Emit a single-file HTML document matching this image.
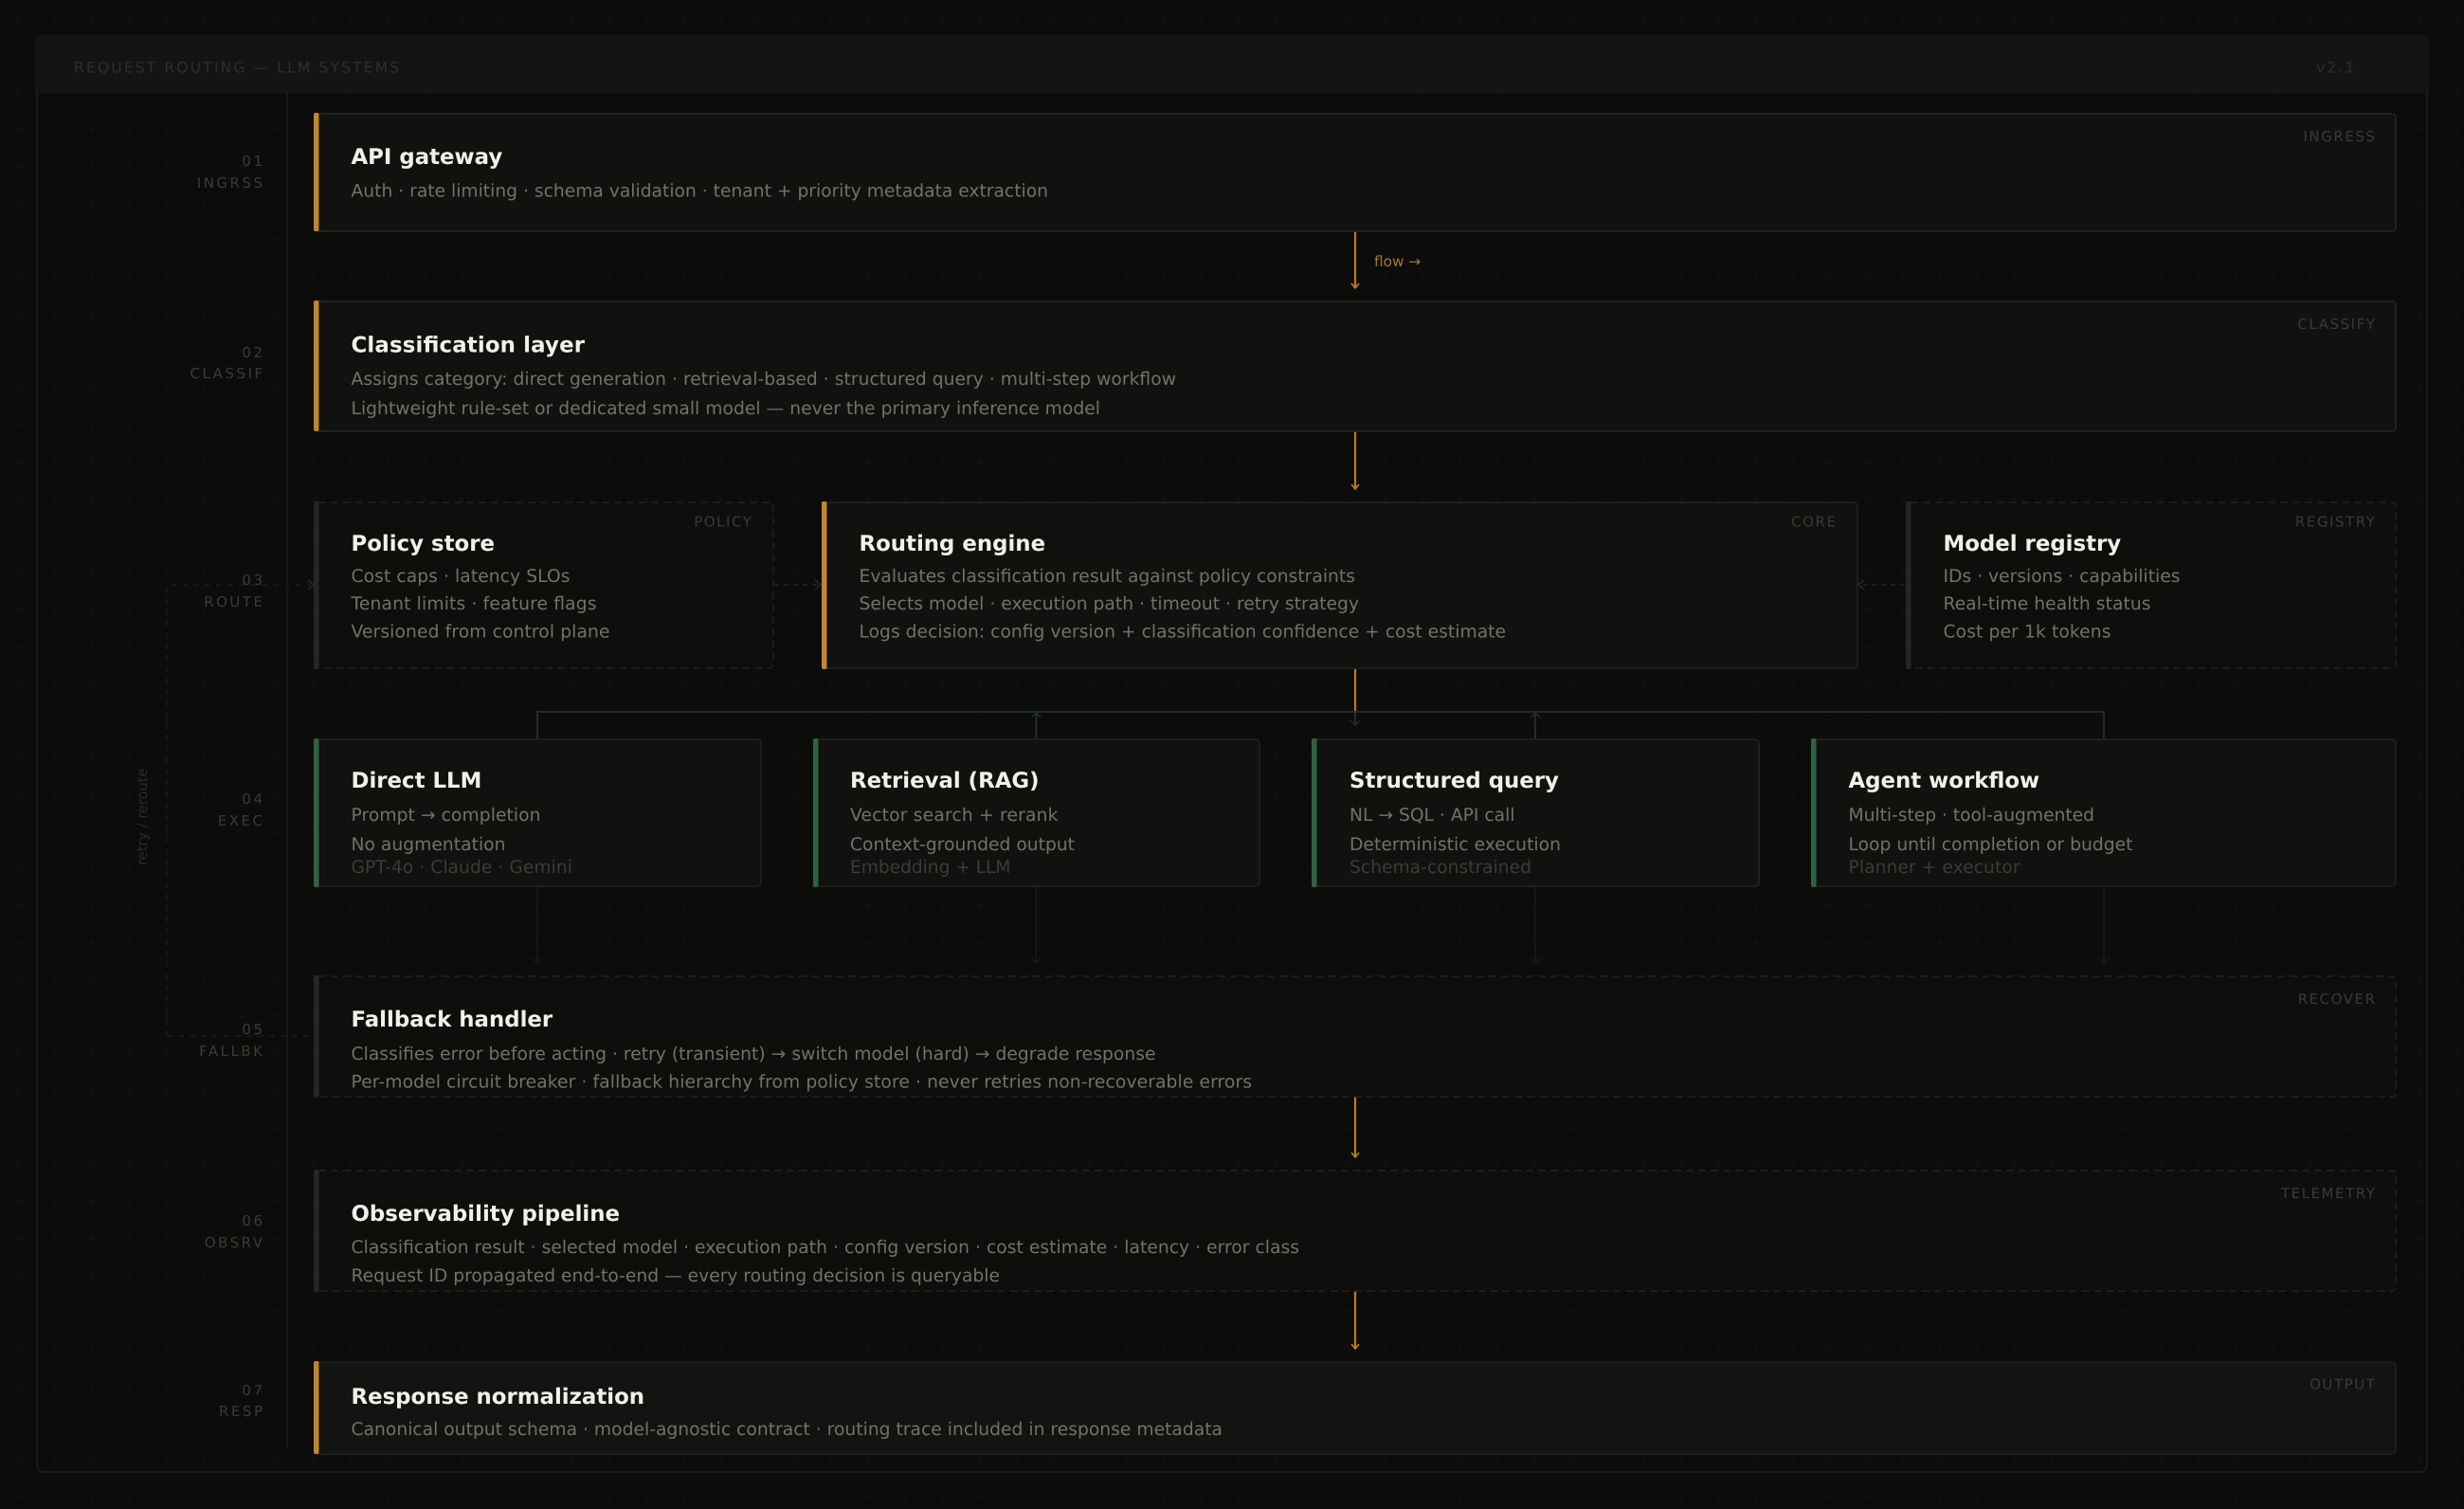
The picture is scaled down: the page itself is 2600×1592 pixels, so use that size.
<!DOCTYPE html>
<html><head><meta charset="utf-8"><title>Request Routing</title>
<style>
html,body{margin:0;padding:0;width:2600px;height:1592px;background:#0d0d0c;overflow:hidden}
svg{display:block;position:absolute;left:0;top:0}
text{font-family:"DejaVu Sans",sans-serif;text-rendering:geometricPrecision}
.t{font-size:22.85px;font-weight:700;fill:#f2f0ea}
.b{font-size:18.7px;fill:#72716a}
.d{font-size:18.7px;fill:#3c3b37}
.g{font-size:15px;letter-spacing:1.55px;fill:#3a3a36;text-anchor:end}
.s{font-size:15px;letter-spacing:2.5px;fill:#3b3b37;text-anchor:end}
.h{font-size:15.6px;letter-spacing:2.1px;fill:#2e2e2c}
.c{fill:#111110;stroke:#1e1e1d;stroke-width:2}
.c2{fill:#131312;stroke:#1c1c1b;stroke-width:2}
.dc{fill:#0e0e0d;stroke:#1d1d1c;stroke-width:2;stroke-dasharray:8 5}
.or{stroke:#b67c2c;stroke-width:2.2;fill:none}
.oh{stroke:#b67c2c;stroke-width:1.6;fill:none}
.gr{stroke:#222e26;stroke-width:2;fill:none}
.gh{stroke:#222e26;stroke-width:1.5;fill:none}
.dm{stroke:#181a18;stroke-width:1.6;fill:none}
.da{stroke:#1f1f1e;stroke-width:2;fill:none;stroke-dasharray:5 5}
.dr{stroke:#191918;stroke-width:1.6;fill:none;stroke-dasharray:6 6}
.ah{stroke:#282827;stroke-width:1.6;fill:none}
</style></head><body>
<svg width="2600" height="1592" viewBox="0 0 2600 1592" xmlns="http://www.w3.org/2000/svg">
<defs><pattern id="dots" width="39" height="39" patternUnits="userSpaceOnUse"><circle cx="19.5" cy="19.5" r="2" fill="#111110"/></pattern></defs>
<rect width="2600" height="1592" fill="#0c0c0b"/>
<rect width="2600" height="1592" fill="url(#dots)"/>

<!-- outer frame -->
<rect x="39" y="39" width="2522" height="1514" rx="8" fill="none" stroke="#1c1c1b" stroke-width="2"/>
<path d="M38 97V46a8 8 0 0 1 8-8H2554a8 8 0 0 1 8 8V97Z" fill="#141413" stroke="#1a1a19" stroke-width="1"/>
<line x1="303" y1="97" x2="303" y2="1527" stroke="#181817" stroke-width="2"/>
<text class="h" x="78" y="76.500">REQUEST ROUTING — LLM SYSTEMS</text>
<text class="h" x="2444" y="76.500">v2.1</text>

<!-- sidebar -->
<text class="s" x="279.500" y="175">01</text><text class="s" x="279.500" y="198">INGRSS</text>
<text class="s" x="279.500" y="377">02</text><text class="s" x="279.500" y="399">CLASSIF</text>
<text class="s" x="279.500" y="617">03</text><text class="s" x="279.500" y="640">ROUTE</text>
<text class="s" x="279.500" y="848">04</text><text class="s" x="279.500" y="871">EXEC</text>
<text class="s" x="279.500" y="1091">05</text><text class="s" x="279.500" y="1114">FALLBK</text>
<text class="s" x="279.500" y="1293">06</text><text class="s" x="279.500" y="1316">OBSRV</text>
<text class="s" x="279.500" y="1472">07</text><text class="s" x="279.500" y="1494">RESP</text>

<!-- dashed retry path -->
<path class="dr" d="M176 1093V617H328"/>
<path class="dr" d="M176 1093H331"/>
<path class="ah" d="M325 612l6 5-6 5"/>
<path class="da" d="M817 617H862"/><path class="ah" d="M860 612l6 5-6 5"/>
<path class="da" d="M2010 617H1966"/><path class="ah" d="M1967 612l-6 5 6 5"/>
<text x="0" y="0" font-size="14.6" fill="#2b2b29" transform="translate(155 913) rotate(-90)">retry / reroute</text>

<!-- connectors -->
<path class="or" d="M1430 244V304"/><path class="oh" d="M1426 299l4 5 4-5"/>
<text x="1450" y="281" font-size="15.3" fill="#a8742c">flow →</text>
<path class="or" d="M1430 455V516"/><path class="oh" d="M1426 511l4 5 4-5"/>
<path class="or" d="M1430 705V750"/>
<path class="gr" d="M567 779V751H2220V779"/>
<path class="gr" d="M1430 751V765"/><path class="gh" d="M1425 760l5 5 5-5"/>
<path class="gr" d="M1093.500 779V752"/><path class="gh" d="M1088.500 757l5-5 5 5"/>
<path class="gr" d="M1620 779V752"/><path class="gh" d="M1615 757l5-5 5 5"/>
<path class="dm" d="M567 936V1016M562 1011l5 5 5-5"/>
<path class="dm" d="M1093.500 936V1016M1088.500 1011l5 5 5-5"/>
<path class="dm" d="M1620 936V1016M1615 1011l5 5 5-5"/>
<path class="dm" d="M2220 936V1016M2215 1011l5 5 5-5"/>
<path class="or" d="M1430 1157V1221"/><path class="oh" d="M1426 1216l4 5 4-5"/>
<path class="or" d="M1430 1362V1423"/><path class="oh" d="M1426 1418l4 5 4-5"/>

<!-- row 1 -->
<rect class="c" x="332" y="120" width="2196" height="124" rx="4" style="stroke:#212120"/>
<rect x="331" y="119" width="5.500" height="125" rx="2" fill="#c0852e"/>
<text class="t" x="370.500" y="173">API gateway</text>
<text class="b" x="370.500" y="207.500" textLength="735.500">Auth · rate limiting · schema validation · tenant + priority metadata extraction</text>
<text class="g" x="2507.500" y="149">INGRESS</text>

<!-- row 2 -->
<rect class="c" x="332" y="318" width="2196" height="137" rx="4" style="stroke:#212120"/>
<rect x="331" y="317" width="5.500" height="138" rx="2" fill="#c0852e"/>
<text class="t" x="370.500" y="371.500" textLength="246.500">Classification layer</text>
<text class="b" x="370.500" y="406" textLength="870.500">Assigns category: direct generation · retrieval-based · structured query · multi-step workflow</text>
<text class="b" x="370.500" y="437" textLength="790.500">Lightweight rule-set or dedicated small model — never the primary inference model</text>
<text class="g" x="2507.500" y="347">CLASSIFY</text>

<!-- row 3 -->
<rect class="dc" x="332" y="530" width="484" height="175" rx="4"/>
<rect x="331" y="529" width="5.500" height="177" rx="2" fill="#262624"/>
<text class="t" x="370.500" y="581">Policy store</text>
<text class="b" x="370.500" y="614" textLength="231">Cost caps · latency SLOs</text>
<text class="b" x="370.500" y="643" textLength="259">Tenant limits · feature flags</text>
<text class="b" x="370.500" y="672.500" textLength="273">Versioned from control plane</text>
<text class="g" x="794.500" y="555.500">POLICY</text>

<rect class="c" x="868" y="530" width="1092" height="175" rx="4"/>
<rect x="867" y="529" width="5.500" height="177" rx="2" fill="#c0852e"/>
<text class="t" x="906.500" y="581">Routing engine</text>
<text class="b" x="906.500" y="614" textLength="523.500">Evaluates classification result against policy constraints</text>
<text class="b" x="906.500" y="643" textLength="527.500">Selects model · execution path · timeout · retry strategy</text>
<text class="b" x="906.500" y="672.500" textLength="682.500">Logs decision: config version + classification confidence + cost estimate</text>
<text class="g" x="1938.500" y="555.500">CORE</text>

<rect class="dc" x="2012" y="530" width="516" height="175" rx="4"/>
<rect x="2011" y="529" width="5.500" height="177" rx="2" fill="#262624"/>
<text class="t" x="2050.500" y="581">Model registry</text>
<text class="b" x="2050.500" y="614" textLength="250">IDs · versions · capabilities</text>
<text class="b" x="2050.500" y="643" textLength="219">Real-time health status</text>
<text class="b" x="2050.500" y="672.500" textLength="177">Cost per 1k tokens</text>
<text class="g" x="2507.500" y="555.500">REGISTRY</text>

<!-- row 4 -->
<rect class="c" x="332" y="780" width="471" height="155" rx="4"/>
<rect x="331" y="779" width="5.500" height="157" rx="2" fill="#2c6340"/>
<text class="t" x="370.500" y="831">Direct LLM</text>
<text class="b" x="370.500" y="866" textLength="200">Prompt → completion</text>
<text class="b" x="370.500" y="897" textLength="163">No augmentation</text>
<text class="d" x="370.500" y="921" textLength="233.500">GPT-4o · Claude · Gemini</text>

<rect class="c" x="859" y="780" width="470" height="155" rx="4"/>
<rect x="858" y="779" width="5.500" height="157" rx="2" fill="#2c6340"/>
<text class="t" x="897" y="831">Retrieval (RAG)</text>
<text class="b" x="897" y="866" textLength="219.500">Vector search + rerank</text>
<text class="b" x="897" y="897" textLength="237">Context-grounded output</text>
<text class="d" x="897" y="921" textLength="169.500">Embedding + LLM</text>

<rect class="c" x="1385" y="780" width="471" height="155" rx="4"/>
<rect x="1384" y="779" width="5.500" height="157" rx="2" fill="#2c6340"/>
<text class="t" x="1424" y="831">Structured query</text>
<text class="b" x="1424" y="866" textLength="174.500">NL → SQL · API call</text>
<text class="b" x="1424" y="897" textLength="223">Deterministic execution</text>
<text class="d" x="1424" y="921" textLength="192">Schema-constrained</text>

<rect class="c" x="1912" y="780" width="616" height="155" rx="4"/>
<rect x="1911" y="779" width="5.500" height="157" rx="2" fill="#2c6340"/>
<text class="t" x="1950.500" y="831">Agent workflow</text>
<text class="b" x="1950.500" y="866" textLength="259.500">Multi-step · tool-augmented</text>
<text class="b" x="1950.500" y="897" textLength="300">Loop until completion or budget</text>
<text class="d" x="1950.500" y="921" textLength="181">Planner + executor</text>

<!-- row 5 -->
<rect class="dc" x="332" y="1030" width="2196" height="127" rx="4"/>
<rect x="331" y="1029" width="5.500" height="129" rx="2" fill="#262624"/>
<text class="t" x="370.500" y="1083">Fallback handler</text>
<text class="b" x="370.500" y="1118" textLength="849">Classifies error before acting · retry (transient) → switch model (hard) → degrade response</text>
<text class="b" x="370.500" y="1147.500" textLength="950.500">Per-model circuit breaker · fallback hierarchy from policy store · never retries non-recoverable errors</text>
<text class="g" x="2507.500" y="1059">RECOVER</text>

<!-- row 6 -->
<rect class="dc" x="332" y="1235" width="2196" height="127" rx="4"/>
<rect x="331" y="1234" width="5.500" height="129" rx="2" fill="#262624"/>
<text class="t" x="370.500" y="1288">Observability pipeline</text>
<text class="b" x="370.500" y="1322" textLength="1000.500">Classification result · selected model · execution path · config version · cost estimate · latency · error class</text>
<text class="b" x="370.500" y="1352" textLength="684.500">Request ID propagated end-to-end — every routing decision is queryable</text>
<text class="g" x="2507.500" y="1264">TELEMETRY</text>

<!-- row 7 -->
<rect class="c2" x="332" y="1437" width="2196" height="97" rx="4"/>
<rect x="331" y="1436" width="5.500" height="98" rx="2" fill="#c0852e"/>
<text class="t" x="370.500" y="1481">Response normalization</text>
<text class="b" x="370.500" y="1514" textLength="919.500">Canonical output schema · model-agnostic contract · routing trace included in response metadata</text>
<text class="g" x="2507.500" y="1465.500">OUTPUT</text>
</svg>
</body></html>
